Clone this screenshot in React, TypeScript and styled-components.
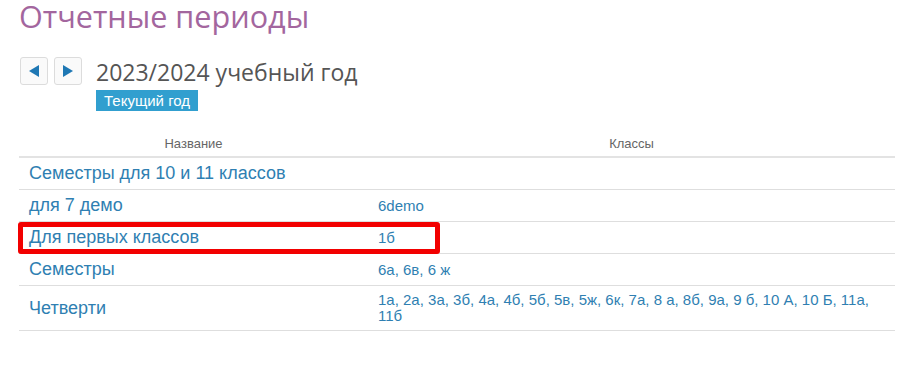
import React from 'react';
import styled, { createGlobalStyle } from 'styled-components';

interface Period {
  name: string;
  classes: string[];
  marked?: boolean;
}

const periods: Period[] = [
  { name: 'Семестры для 10 и 11 классов', classes: [] },
  { name: 'для 7 демо', classes: ['6demo'] },
  { name: 'Для первых классов', classes: ['1б'], marked: true },
  { name: 'Семестры', classes: ['6а', '6в', '6 ж'] },
  {
    name: 'Четверти',
    classes: [
      '1а', '2а', '3а', '3б', '4а', '4б', '5б', '5в', '5ж', '6к', '7а', '8 а',
      '8б', '9а', '9 б', '10 А', '10 Б', '11а', '11б',
    ],
  },
];

const Arrow: React.FC<{ dir: 'left' | 'right' }> = ({ dir }) => (
  <svg width="12" height="14" viewBox="0 0 12 14">
    {dir === 'left'
      ? <path d="M11 1 L1 7 L11 13 Z" fill="#1f78b4" />
      : <path d="M1 1 L11 7 L1 13 Z" fill="#1f78b4" />}
  </svg>
);

const App: React.FC = () => (
  <>
    <GlobalStyle />
    <Page>
      <Title>Отчетные периоды</Title>
      <YearBar>
        <NavButtons>
          <NavButton><Arrow dir="left" /></NavButton>
          <NavButton><Arrow dir="right" /></NavButton>
        </NavButtons>
        <YearInfo>
          <YearTitle>2023/2024 учебный год</YearTitle>
          <Badge>Текущий год</Badge>
        </YearInfo>
      </YearBar>
      <Table>
        <thead>
          <tr>
            <HeadCell $width={329}>Название</HeadCell>
            <HeadCell>Классы</HeadCell>
          </tr>
        </thead>
        <tbody>
          {periods.map((p) => (
            <Row key={p.name}>
              <NameCell>
                {p.marked && <Marker />}
                <NameLink>{p.name}</NameLink>
              </NameCell>
              <ClassCell>
                {p.classes.map((c, i) => (
                  <React.Fragment key={c}>
                    <ClassLink>{c}</ClassLink>
                    {i < p.classes.length - 1 && ', '}
                  </React.Fragment>
                ))}
              </ClassCell>
            </Row>
          ))}
        </tbody>
      </Table>
    </Page>
  </>
);

const GlobalStyle = createGlobalStyle`
  body {
    margin: 0;
    background: #fff;
    font-family: "Liberation Sans", Arial, sans-serif;
  }
`;

const Page = styled.div`
  padding: 0 18px 0 19px;
`;

const Title = styled.h1`
  margin: 0;
  font-family: "Open Sans", "Liberation Sans", sans-serif;
  font-weight: 400;
  font-size: 30.6px;
  line-height: 33px;
  color: #a3669e;
`;

const YearBar = styled.div`
  display: flex;
  align-items: flex-start;
  gap: 14px;
  margin-top: 24px;
`;

const NavButtons = styled.div`
  display: flex;
  gap: 6px;
  padding-left: 1px;
`;

const NavButton = styled.div`
  width: 28px;
  height: 28px;
  box-sizing: border-box;
  border: 1px solid #dcdcdc;
  border-radius: 3px;
  background: #fafafa;
  display: flex;
  align-items: center;
  justify-content: center;
`;

const YearInfo = styled.div`
  display: flex;
  flex-direction: column;
  align-items: flex-start;
`;

const YearTitle = styled.div`
  font-family: "Open Sans", "Liberation Sans", sans-serif;
  font-size: 23px;
  line-height: 30px;
  color: #555;
`;

const Badge = styled.span`
  margin-top: 3px;
  background: #319fcf;
  color: #fff;
  font-size: 15px;
  line-height: 21px;
  padding: 0 8px;
`;

const Table = styled.table`
  width: 100%;
  margin-top: 19px;
  border-collapse: collapse;
  table-layout: fixed;
`;

const HeadCell = styled.th<{ $width?: number }>`
  width: ${(p) => (p.$width ? `${p.$width}px` : 'auto')};
  font-weight: 400;
  font-size: 13px;
  color: #666;
  text-align: center;
  height: 26px;
  padding: 0 10px;
  border-bottom: 2px solid #e3e3e3;
`;

const Row = styled.tr`
  border-bottom: 1px solid #dedede;
`;

const NameCell = styled.td`
  position: relative;
  height: 31px;
  padding: 0 10px;
  vertical-align: middle;
`;

const ClassCell = styled.td`
  padding: 6px 10px;
  vertical-align: middle;
  font-size: 15px;
  line-height: 16px;
  color: #2f7fb2;
`;

const NameLink = styled.a`
  font-size: 18px;
  color: #2f7fb2;
  text-decoration: none;
`;

const ClassLink = styled.a`
  color: #2f7fb2;
  text-decoration: none;
`;

const Marker = styled.div`
  position: absolute;
  left: -1px;
  top: 0;
  width: 422px;
  height: 32px;
  box-sizing: border-box;
  border: 5px solid #f20000;
  border-radius: 3px;
`;

export default App;
